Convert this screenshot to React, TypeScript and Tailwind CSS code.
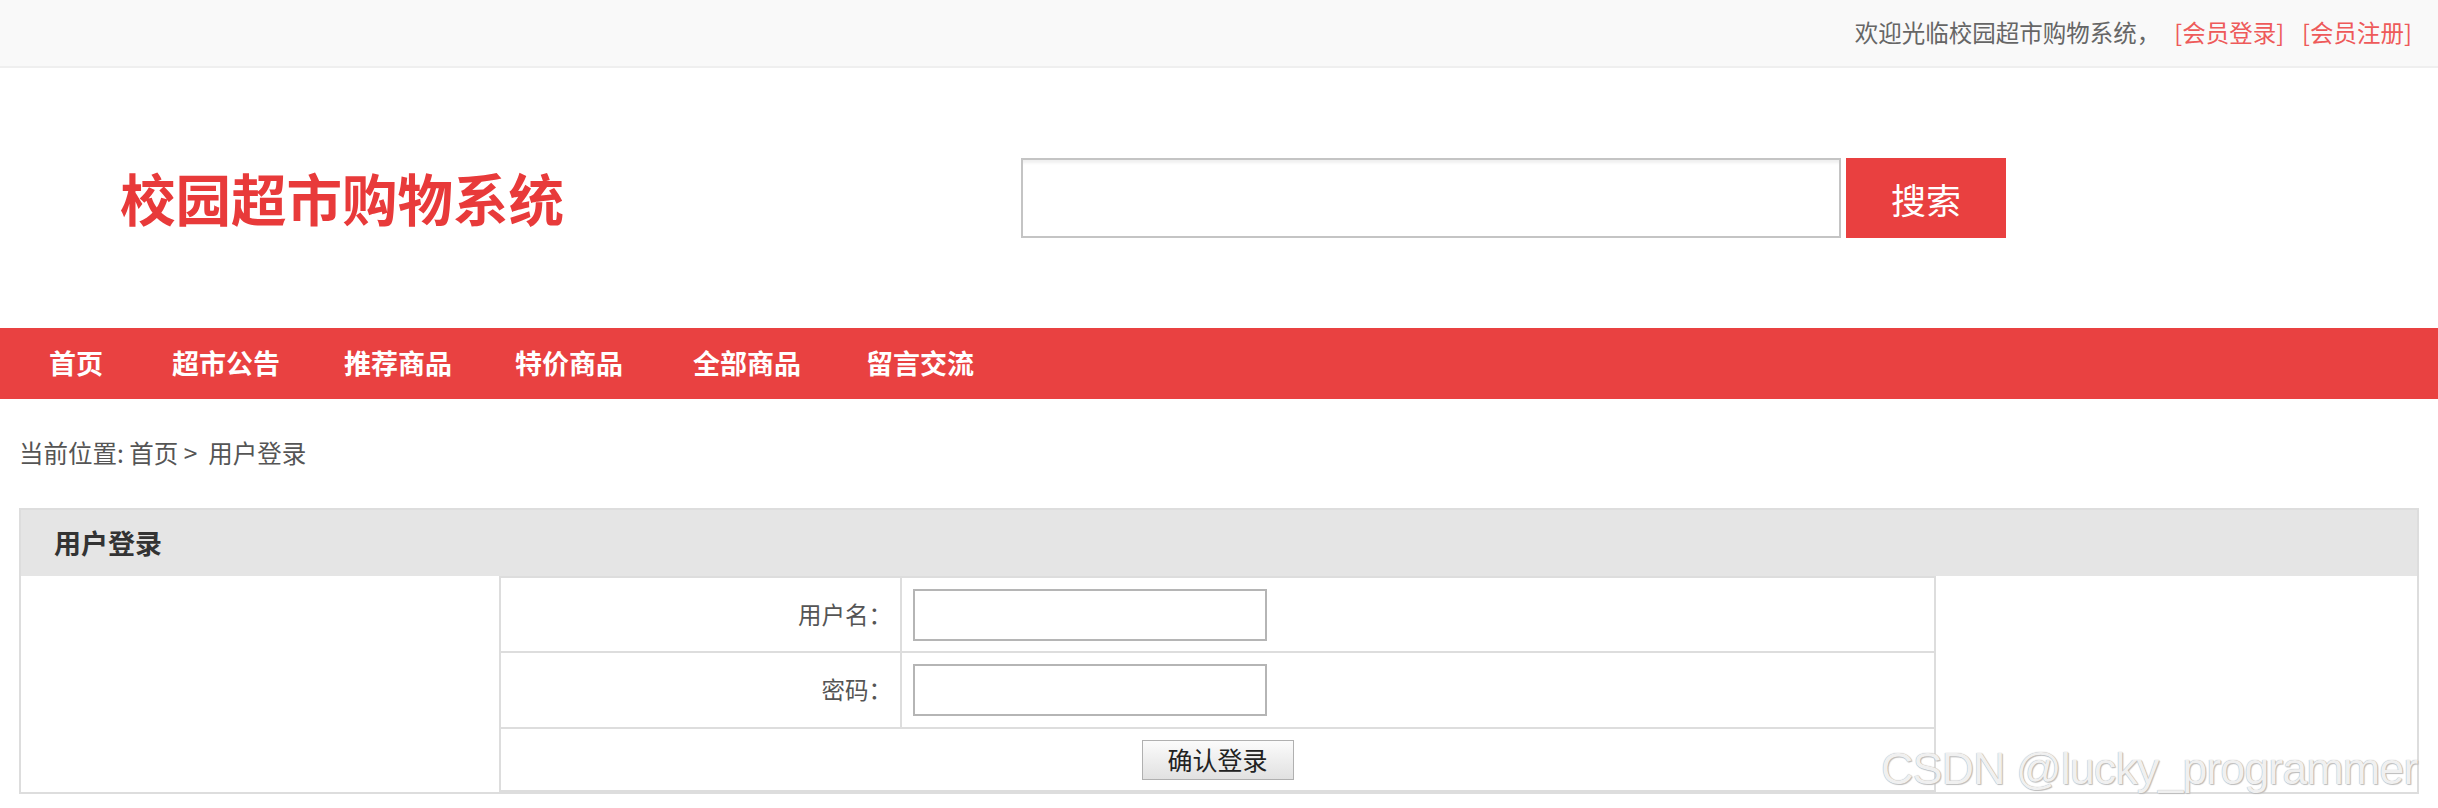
import React from 'react'

// 顶部导航项 — 宽度按原图各项起点间距给定
const daohang: { ming: string; kuan: string }[] = [
  { ming: '首页', kuan: 'w-[123px]' },
  { ming: '超市公告', kuan: 'w-[172px]' },
  { ming: '推荐商品', kuan: 'w-[171px]' },
  { ming: '特价商品', kuan: 'w-[178px]' },
  { ming: '全部商品', kuan: 'w-[173px]' },
  { ming: '留言交流', kuan: 'w-auto' },
]

export default function App() {
  return (
    <div className="relative w-[2438px] h-[808px] overflow-hidden bg-white font-['Noto_Sans_CJK_SC','Noto_Sans',sans-serif]">
      {/* 顶栏 */}
      <div className="h-[68px] bg-[#f9f9f9] border-b-2 border-[#efefef] flex items-center justify-end pr-[26px] text-[23.5px] text-[#666]">
        <span>欢迎光临校园超市购物系统，</span>
        <a className="ml-[14px] text-[#ee5a5a] cursor-pointer">[会员登录]</a>
        <a className="ml-[18px] text-[#ee5a5a] cursor-pointer">[会员注册]</a>
      </div>

      {/* 标题 + 搜索 */}
      <div className="h-[260px] flex items-center">
        <div className="w-[1021px] pl-[120px] text-[55.5px] font-bold text-[#e83a3a] leading-none">校园超市购物系统</div>
        <input
          type="text"
          className="w-[820px] h-[80px] border-2 border-[#c4c4c4] bg-white shadow-[inset_0_5px_3px_-2px_#f0f0f0] outline-none"
        />
        <button className="ml-[5px] w-[160px] h-[80px] bg-[#e94040] text-white text-[35px] leading-none">搜索</button>
      </div>

      {/* 红色导航 */}
      <div className="h-[71px] bg-[#e94141] flex items-center pl-[49px] text-[27px] font-bold text-white">
        {daohang.map(d => (
          <span key={d.ming} className={`${d.kuan} shrink-0`}>{d.ming}</span>
        ))}
      </div>

      {/* 面包屑 */}
      <div className="h-[109px] flex items-center pl-[19px] text-[24.5px] text-[#555]">
        当前位置: 首页 &gt;&nbsp; 用户登录
      </div>

      {/* 登录面板 */}
      <div className="mx-[19px] border-2 border-[#dddddd]">
        <div className="h-[66px] bg-[#e5e5e5] flex items-center pl-[33px] text-[27px] font-bold text-[#333]">用户登录</div>
        <div className="flex h-[216px]">
          <div className="w-[478px] shrink-0" />
          <div className="w-[1437px] shrink-0 flex flex-col border-2 border-[#dddddd] h-[216px] text-[23.5px] text-[#555]">
            <div className="h-[75px] flex border-b-2 border-[#dddddd]">
              <div className="w-[401px] flex items-center justify-end pr-[8px] border-r-2 border-[#dddddd]">用户名：</div>
              <div className="flex-1 flex items-center pl-[11px]">
                <input type="text" className="w-[354px] h-[52px] border-2 border-[#b5b5b5] bg-white outline-none" />
              </div>
            </div>
            <div className="h-[76px] flex border-b-2 border-[#dddddd]">
              <div className="w-[401px] flex items-center justify-end pr-[8px] border-r-2 border-[#dddddd]">密码：</div>
              <div className="flex-1 flex items-center pl-[11px]">
                <input type="password" className="w-[354px] h-[52px] border-2 border-[#b5b5b5] bg-white outline-none" />
              </div>
            </div>
            <div className="flex-1 flex items-center justify-center">
              <button className="w-[152px] h-[40px] border border-[#b0b0b0] bg-linear-to-b from-[#fbfbfb] to-[#e1e1e1] text-[25px] leading-none text-[#222]">确认登录</button>
            </div>
          </div>
          <div className="flex-1" />
        </div>
      </div>

      {/* 水印 */}
      <div className="absolute left-[1881px] top-[746px] whitespace-nowrap font-['Liberation_Sans',sans-serif] text-[45px] leading-none tracking-[-1px] text-[#f0f0f0] [text-shadow:0_0_1px_#9a9a9a,1px_1px_1px_#c0c0c0] pointer-events-none">
        CSDN @lucky_programmer
      </div>
    </div>
  )
}
